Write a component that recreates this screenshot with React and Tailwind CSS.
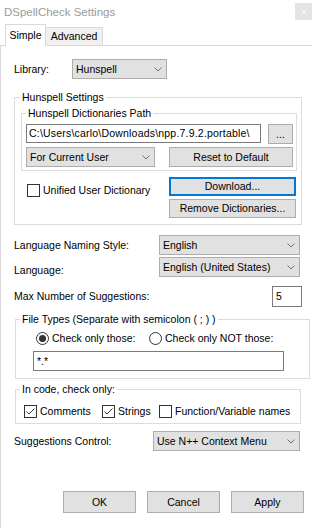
import React from "react";

function Chevron() {
  return (
    <svg width="8" height="5" viewBox="0 0 8 5" className="shrink-0">
      <path d="M0.5 0.5 L4 4 L7.5 0.5" stroke="#6d6d6d" strokeWidth="1" fill="none" />
    </svg>
  );
}

function Select({ w, text }) {
  return (
    <div className={`${w} h-[20px] bg-[#e1e1e1] border border-[#adadad] flex items-center pl-[3px] pr-[4px] shrink-0`}>
      <span className="flex-1 whitespace-nowrap overflow-hidden">{text}</span>
      <Chevron />
    </div>
  );
}

function Button({ w, h = "h-[20px]", children, focus }) {
  return (
    <div
      className={`${w} ${h} bg-[#e1e1e1] flex items-center justify-center shrink-0 whitespace-nowrap ${
        focus ? "border-2 border-[#0078d7]" : "border border-[#adadad]"
      }`}
    >
      {children}
    </div>
  );
}

function Check({ checked }) {
  return (
    <div className="w-[13px] h-[13px] border border-[#333333] bg-white flex items-center justify-center shrink-0">
      {checked && (
        <svg width="11" height="11" viewBox="0 0 11 11">
          <path d="M1.5 5.5 L4 8 L9.5 2.5" stroke="#333333" strokeWidth="1" fill="none" />
        </svg>
      )}
    </div>
  );
}

function Radio({ checked }) {
  return (
    <div className="w-[13px] h-[13px] rounded-full border border-[#333333] bg-white flex items-center justify-center shrink-0">
      {checked && <div className="w-[7px] h-[7px] rounded-full bg-[#333333]" />}
    </div>
  );
}

export default function App() {
  return (
    <div className="w-[312px] h-[528px] bg-white overflow-hidden flex flex-col font-['Liberation_Sans',Arial,sans-serif] text-[10.5px] leading-[13px] text-black">
      {/* Title bar */}
      <div className="h-[22px] flex items-start shrink-0">
        <div className="pl-[4px] pt-[5px] text-[11.5px] leading-[14px] text-[#9b9b9b] whitespace-nowrap">
          DSpellCheck Settings
        </div>
        <div className="ml-auto mt-[3px] w-[17px] h-[17px] bg-[#e3e3e3] flex items-center justify-center">
          <svg width="6" height="6" viewBox="0 0 6 6">
            <path d="M0.5 0.5 L5.5 5.5 M5.5 0.5 L0.5 5.5" stroke="#ffffff" strokeWidth="1" />
          </svg>
        </div>
      </div>

      {/* Tabs */}
      <div className="h-[24px] flex items-end shrink-0">
        <div className="w-[5px] h-[1px] bg-[#d9d9d9]" />
        <div className="w-[41px] h-[22px] border-l border-t border-r border-[#d9d9d9] bg-white flex justify-center pt-[4px]">
          Simple
        </div>
        <div className="w-[57px] h-[19px] border-t border-r border-b border-[#d9d9d9] bg-[#f0f0f0] flex justify-center pt-[2px]">
          Advanced
        </div>
        <div className="flex-1 h-[1px] bg-[#d9d9d9]" />
      </div>

      {/* Panel */}
      <div className="flex-1 border-l border-[#d9d9d9] pl-[13px] flex flex-col">
        {/* Library */}
        <div className="mt-[13px] flex items-center">
          <div className="w-[58px]">Library:</div>
          <Select w="w-[95px]" text="Hunspell" />
        </div>

        {/* Hunspell Settings */}
        <fieldset className="mt-[12px] w-[288px] border border-[#dcdcdc]">
          <legend className="ml-[5px] px-[2px] leading-[13px]">Hunspell Settings</legend>
          <fieldset className="mt-[3px] ml-[6px] w-[276px] border border-[#dcdcdc] pb-[3px]">
            <legend className="ml-[4px] px-[2px] leading-[13px]">Hunspell Dictionaries Path</legend>
            <div className="mt-[4px] ml-[4px] flex items-start">
              <div className="w-[235px] h-[19px] border border-[#7a7a7a] bg-white overflow-hidden whitespace-nowrap pl-[2px] flex items-center tracking-[0.2px]">
                C:\Users\carlo\Downloads\npp.7.9.2.portable\
              </div>
              <div className="ml-[7px]">
                <Button w="w-[25px]">...</Button>
              </div>
            </div>
            <div className="mt-[3px] ml-[4px] flex items-center">
              <Select w="w-[129px]" text="For Current User" />
              <div className="ml-[14px]">
                <Button w="w-[124px]">Reset to Default</Button>
              </div>
            </div>
          </fieldset>
          <div className="flex pb-[6px]">
            <div className="w-[154px] pl-[12px] pt-[13px] flex items-start gap-[3px]">
              <Check />
              <span className="whitespace-nowrap">Unified User Dictionary</span>
            </div>
            <div className="flex flex-col pt-[6px] gap-[3px]">
              <Button w="w-[127px]" h="h-[19px]" focus>
                Download...
              </Button>
              <Button w="w-[127px]" h="h-[19px]">
                Remove Dictionaries...
              </Button>
            </div>
          </div>
        </fieldset>

        {/* Language naming style */}
        <div className="mt-[10px] flex items-center">
          <div className="w-[145px]">Language Naming Style:</div>
          <Select w="w-[141px]" text="English" />
        </div>
        <div className="mt-[2px] flex items-center">
          <div className="w-[145px] mt-[6px]">Language:</div>
          <Select w="w-[141px]" text="English (United States)" />
        </div>
        <div className="mt-[9px] flex items-center">
          <div className="w-[258px]">Max Number of Suggestions:</div>
          <div className="w-[30px] h-[21px] border border-[#7a7a7a] bg-white flex items-center pl-[3px]">5</div>
        </div>

        {/* File types */}
        <fieldset className="mt-[6px] ml-[1px] w-[295px] border border-[#dcdcdc] pb-[7px]">
          <legend className="ml-[4px] px-[2px] leading-[13px]">File Types (Separate with semicolon ( ; ) )</legend>
          <div className="mt-[6px] ml-[20px] flex items-center">
            <div className="w-[113px] flex items-center gap-[3px]">
              <Radio checked />
              <span className="whitespace-nowrap">Check only those:</span>
            </div>
            <div className="flex items-center gap-[3px]">
              <Radio />
              <span className="whitespace-nowrap">Check only NOT those:</span>
            </div>
          </div>
          <div className="mt-[6px] ml-[17px] w-[251px] h-[20px] border border-[#7a7a7a] bg-white flex items-center pl-[3px]">
            *.*
          </div>
        </fieldset>

        {/* In code */}
        <fieldset className="mt-[4px] ml-[1px] w-[286px] border border-[#dcdcdc] pb-[5px]">
          <legend className="ml-[4px] px-[2px] leading-[13px]">In code, check only:</legend>
          <div className="mt-[9px] ml-[8px] flex items-center">
            <div className="w-[78px] flex items-center gap-[3px]">
              <Check checked />
              <span>Comments</span>
            </div>
            <div className="w-[57px] flex items-center gap-[3px]">
              <Check checked />
              <span>Strings</span>
            </div>
            <div className="flex items-center gap-[3px]">
              <Check />
              <span className="whitespace-nowrap">Function/Variable names</span>
            </div>
          </div>
        </fieldset>

        {/* Suggestions control */}
        <div className="mt-[7px] flex items-center">
          <div className="w-[139px]">Suggestions Control:</div>
          <Select w="w-[147px]" text="Use N++ Context Menu" />
        </div>

        {/* Bottom buttons */}
        <div className="mt-[40px] ml-[49px] flex gap-[11px]">
          <Button w="w-[73px]" h="h-[22px]">OK</Button>
          <Button w="w-[73px]" h="h-[22px]">Cancel</Button>
          <Button w="w-[73px]" h="h-[22px]">Apply</Button>
        </div>
      </div>
    </div>
  );
}
